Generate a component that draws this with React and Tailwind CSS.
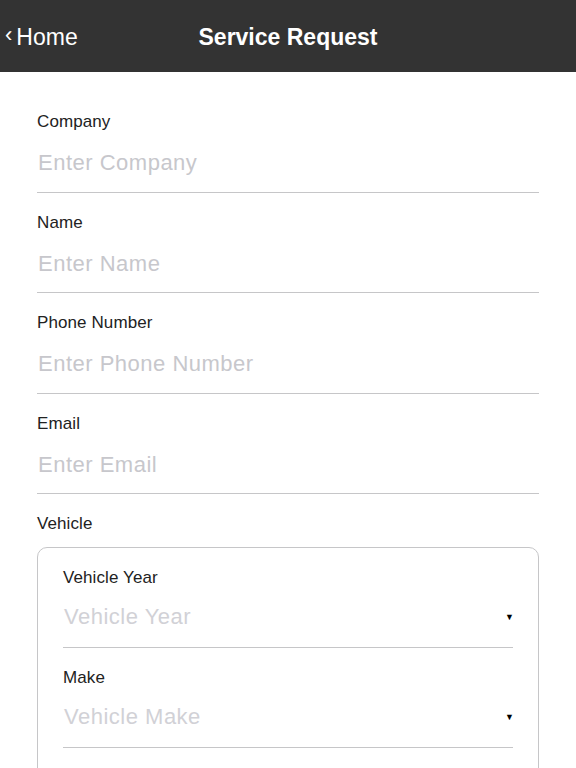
import React from "react";

const fields = [
  { label: "Company", placeholder: "Enter Company" },
  { label: "Name", placeholder: "Enter Name" },
  { label: "Phone Number", placeholder: "Enter Phone Number" },
  { label: "Email", placeholder: "Enter Email" },
];

const vehicleFields = [
  { label: "Vehicle Year", placeholder: "Vehicle Year" },
  { label: "Make", placeholder: "Vehicle Make" },
];

function Field({ label, placeholder }) {
  return (
    <div className="pt-[20px] pb-[14.5px] border-b border-[#c6c6c8]">
      <div className="text-[17px] leading-[20px] tracking-[0.1px] text-[#222]">{label}</div>
      <input
        className="mt-[17px] pl-px w-full text-[22px] leading-[28px] h-[28px] tracking-[0.5px] outline-none placeholder:text-[#c7c7cc] bg-transparent"
        placeholder={placeholder}
      />
    </div>
  );
}

function SelectField({ label, placeholder }) {
  return (
    <div className="pt-[20px] pb-[16px] border-b border-[#c6c6c8]">
      <div className="text-[17px] leading-[20px] tracking-[0.1px] text-[#222]">{label}</div>
      <div className="mt-[15px] pl-px flex items-center justify-between h-[28px]">
        <span className="text-[22px] leading-[28px] tracking-[0.5px] text-[#d1d1d6]">{placeholder}</span>
        <span className="text-[9px] leading-none text-black -mr-[1px]">▼</span>
      </div>
    </div>
  );
}

export default function App() {
  return (
    <div className="min-h-screen bg-white font-['Liberation_Sans',Arial,sans-serif]">
      {/* Nav bar */}
      <div className="h-[72px] bg-[#333333] grid grid-cols-[1fr_auto_1fr] items-center text-white">
        <div className="flex items-center pl-[5px] pt-[2px]">
          <span className="text-[22px] leading-none -mt-[4px] mr-[4px]">‹</span>
          <span className="text-[23px] leading-none">Home</span>
        </div>
        <div className="text-[23px] font-bold pt-[2px]">Service Request</div>
        <div />
      </div>

      {/* Form */}
      <div className="px-[37px] pt-[20px]">
        {fields.map((f) => (
          <Field key={f.label} {...f} />
        ))}

        <div className="pt-[20px] text-[17px] leading-[20px] tracking-[0.1px] text-[#222]">Vehicle</div>
        <div className="mt-[13px] border border-[#c6c6c8] rounded-[10px] px-[25px] pb-[60px]">
          {vehicleFields.map((f) => (
            <SelectField key={f.label} {...f} />
          ))}
        </div>
      </div>
    </div>
  );
}
